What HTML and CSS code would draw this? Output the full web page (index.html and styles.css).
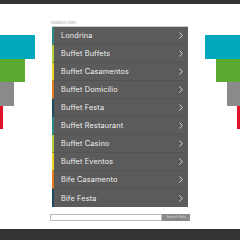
FILE: index.html
```html
<!DOCTYPE html>
<html lang="en">
<head>
  <meta charset="UTF-8">
  <title>Related Links</title>
  <link rel="stylesheet" href="styles.css">
</head>
<body>
  <div class="top-bar"></div>

  <div class="main">
    <div class="deco deco-left">
      <div class="bar teal"></div>
      <div class="bar green"></div>
      <div class="bar gray"></div>
      <div class="bar red"></div>
    </div>

    <div class="center">
      <div class="label">Related Links</div>
      <ul class="links">
        <li class="c-teal">Londrina<svg viewBox="0 0 4 7"><polyline points="0.5,0.5 3.3,3.5 0.5,6.5"/></svg></li>
        <li class="c-lime">Buffet Buffets<svg viewBox="0 0 4 7"><polyline points="0.5,0.5 3.3,3.5 0.5,6.5"/></svg></li>
        <li class="c-yellow">Buffet Casamentos<svg viewBox="0 0 4 7"><polyline points="0.5,0.5 3.3,3.5 0.5,6.5"/></svg></li>
        <li class="c-orange">Buffet Domicilio<svg viewBox="0 0 4 7"><polyline points="0.5,0.5 3.3,3.5 0.5,6.5"/></svg></li>
        <li class="c-navy">Buffet Festa<svg viewBox="0 0 4 7"><polyline points="0.5,0.5 3.3,3.5 0.5,6.5"/></svg></li>
        <li class="c-teal">Buffet Restaurant<svg viewBox="0 0 4 7"><polyline points="0.5,0.5 3.3,3.5 0.5,6.5"/></svg></li>
        <li class="c-lime">Buffet Casino<svg viewBox="0 0 4 7"><polyline points="0.5,0.5 3.3,3.5 0.5,6.5"/></svg></li>
        <li class="c-yellow">Buffet Eventos<svg viewBox="0 0 4 7"><polyline points="0.5,0.5 3.3,3.5 0.5,6.5"/></svg></li>
        <li class="c-orange">Bife Casamento<svg viewBox="0 0 4 7"><polyline points="0.5,0.5 3.3,3.5 0.5,6.5"/></svg></li>
        <li class="c-navy">Bife Festa<svg viewBox="0 0 4 7"><polyline points="0.5,0.5 3.3,3.5 0.5,6.5"/></svg></li>
      </ul>
      <form class="search" onsubmit="return false">
        <input type="text">
        <button type="submit">Search Ads</button>
      </form>
    </div>

    <div class="deco deco-right">
      <div class="bar teal"></div>
      <div class="bar green"></div>
      <div class="bar gray"></div>
      <div class="bar red"></div>
    </div>
  </div>

  <div class="bottom-bar"></div>
</body>
</html>
```

FILE: styles.css
```css
body {
  margin: 0;
  width: 240px;
  height: 240px;
  background: #fff;
  font-family: Inter, "Noto Sans", sans-serif;
  display: flex;
  flex-direction: column;
  overflow: hidden;
}

.top-bar {
  height: 4px;
  background: #333;
}

.bottom-bar {
  height: 11px;
  background: #333;
}

.main {
  flex: 1;
  display: grid;
  grid-template-columns: 1fr 140px 1fr;
}

.deco {
  display: flex;
  flex-direction: column;
  padding-top: 31px;
}

.deco-left {
  align-items: flex-start;
}

.deco-right {
  align-items: flex-end;
}

.bar {
  height: 23.5px;
}

.teal { width: 35px; background: #00a8bd; }
.green { width: 24.5px; background: #5aab2f; }
.gray { width: 13.5px; background: #8a8a8a; }
.red { width: 3px; background: #e0122e; }

.center {
  padding-top: 15px;
}

.label {
  font-size: 4px;
  line-height: 7px;
  color: #aaa;
  padding-left: 1px;
}

.links {
  list-style: none;
  margin: 0 2px;
  padding: 0;
  background: #5b5b5b;
  border-top: 1px solid #ccc;
}

.links li {
  height: 18px;
  box-sizing: border-box;
  display: flex;
  align-items: center;
  justify-content: space-between;
  padding: 0 5px 0 7px;
  border-left: 2px solid;
  border-bottom: 1px solid #535353;
  color: #f0f0f0;
  font-size: 7.3px;
  font-weight: 400;
  letter-spacing: 0.15px;
}

.links li:last-child {
  border-bottom: none;
}

.links svg {
  width: 4px;
  height: 7px;
  fill: none;
  stroke: #e0e0e0;
  stroke-width: 0.9;
}

.c-teal { border-left-color: #2a8c84 !important; }
.c-lime { border-left-color: #b6cf3c !important; }
.c-yellow { border-left-color: #f0d31f !important; }
.c-orange { border-left-color: #e67a1e !important; }
.c-navy { border-left-color: #1d4a5f !important; }

.search {
  display: flex;
  margin-top: 7px;
  height: 7px;
}

.search input {
  flex: 1;
  width: 0;
  min-width: 0;
  margin: 0;
  padding: 0;
  height: 7px;
  box-sizing: border-box;
  border: 1px solid #bbb;
  background: #fff;
}

.search button {
  width: 28px;
  flex: none;
  margin: 0;
  padding: 0;
  height: 7px;
  border: none;
  background: #8a8a8a;
  color: #ddd;
  font-family: Inter, sans-serif;
  font-size: 3.5px;
  line-height: 7px;
}
```
